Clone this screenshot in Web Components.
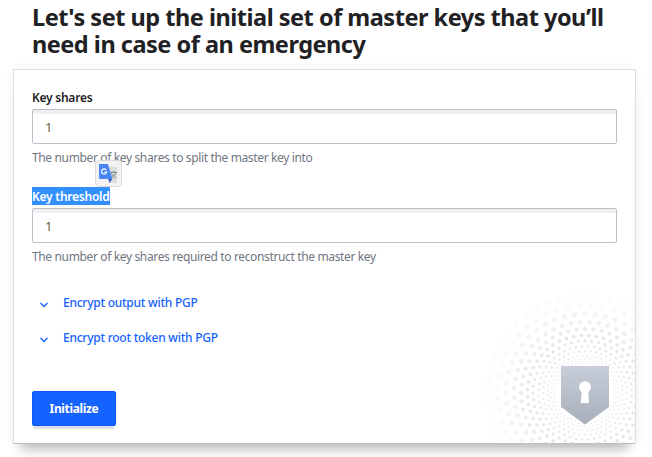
<!DOCTYPE html>
<html lang="en"><head><meta charset="utf-8"><title>Initialize</title>
<style>
html,body{margin:0;background:#fff}
body{width:652px;height:457px;overflow:hidden;font-family:"Noto Sans","Open Sans",sans-serif;color:#1f2124}
</style></head><body>
<setup-page></setup-page>
<script>
const define=(name,html,init)=>customElements.define(name,class extends HTMLElement{
  constructor(){super();this.attachShadow({mode:'open'}).innerHTML=html;if(init)init(this,this.shadowRoot);}
});
define('page-title',`<style>:host{display:block;padding:4px 0 0 32px;height:65px;box-sizing:border-box;font:700 23.5px/27px "Noto Sans","Open Sans",sans-serif;letter-spacing:-.49px;white-space:nowrap}</style><slot></slot>`);
define('key-field',`<style>:host{display:block;height:99px;font-size:12px;white-space:nowrap}
.l{display:block;height:18px;line-height:19px;width:max-content;font-weight:600;letter-spacing:-.24px}
:host([selected]) .l{background:#3390ff;color:#fff}
.i{box-sizing:border-box;width:585px;height:35px;margin-top:3px;border:1px solid #bac1cc;border-radius:2px;background:#fff;box-shadow:inset 0 4px 0 #f0f0f0;padding:2px 12px 0;line-height:30px;font-size:13px;color:#6f6347}
.h{line-height:18px;margin-top:5px;color:#6f7682;letter-spacing:-.36px}</style><span class="l"><slot name="label"></slot></span><div class="i"><slot name="value"></slot></div><div class="h"><slot name="help"></slot></div>`);
define('toggle-link',`<style>:host{display:flex;align-items:center;height:35px;color:#1563ff;font-size:12px;font-weight:500;letter-spacing:-.25px;white-space:nowrap}
svg{width:10px;height:8px;margin:2px 14px 0 7px}span{padding-bottom:2px}</style><svg viewBox="0 0 10 8"><path d="M1.500 2 5 5.500 8.500 2" fill="none" stroke="#1563ff" stroke-width="1.4"/></svg><span><slot></slot></span>`);
define('primary-button',`<style>:host{display:flex;align-items:center;justify-content:center;box-sizing:border-box;width:84px;height:35px;border:1px solid #0f5bf5;border-radius:2px;background:#1563ff;color:#fff;font-size:12px;font-weight:700;letter-spacing:-.35px;box-shadow:0 5px 1px -2px #dfe1e6}</style><slot></slot>`);
define('translate-badge',`<style>:host{display:block;width:27px;height:27px}svg{display:block}</style>
<svg width="27" height="27" viewBox="0 0 27 27"><rect x=".5" y=".5" width="26" height="26" rx="3.5" fill="#f3f3f3" stroke="#dcdcdc"/><path d="M10 7h12.200v16H15z" fill="#dedede"/><path d="M15.500 12.400h6.500M18.500 11v1.400M20.800 12.500c-.5 2.200-2 4.100-4.800 5.500M16.500 13.500c1 2 2.600 3.600 4.800 4.500" fill="none" stroke="#738891" stroke-width="1"/><path d="M13.200 18.800h4.200L14.500 23z" fill="#3454c5"/><path d="M4 4h8.900l4.500 15H5.200Q4 19 4 17.800z" fill="#4a86f3"/><path d="M11.200 9.800A2.600 2.600 0 1 0 11.700 12H9.300" fill="none" stroke="#fff" stroke-width="1.2"/></svg>`);
define('vault-art',`<style>:host{display:block;width:150px;height:155px}svg{display:block}</style><svg width="150" height="155" viewBox="485 288 150 155"><defs><linearGradient id="g" x2="0" y2="1"><stop stop-color="#c8ced9"/><stop offset="1" stop-color="#a7afbb"/></linearGradient></defs><g id="dots" fill="#dfe3e9"></g><path d="M561 366h48v41l-24 17.500-24-17.500z" fill="url(#g)"/><path d="M581.700 392.300A6 6 0 1 1 588.300 392.300L589 403h-8.500z" fill="#fff"/></svg>`,(h,r)=>{
  const radii=[97.5,87.6,79,71,64,57.6,52,46.6,42,37.6,34,30.6],fade=[.1,.19,.36,.5,.68,.85,.82,.7,.6,.5,.5,.5];let s='';
  radii.forEach((R,k)=>{for(let i=0;i<48;i++){const a=(i+(k%2)/2)*Math.PI/24;
    s+=`<circle cx="${(585+R*Math.sin(a)).toFixed(2)}" cy="${(393-R*Math.cos(a)).toFixed(2)}" r="${(R*.032).toFixed(2)}" opacity="${fade[k]}"/>`}});
  r.getElementById('dots').innerHTML=s;});
define('setup-card',`<style>:host{display:block;position:relative;box-sizing:border-box;width:623px;height:375px;margin-left:13px;padding:18px 18px 0;border:1px solid #dedfe2;border-bottom-color:#bfc0c2;background:#fff;box-shadow:0 13px 12px -8px rgba(0,0,0,.28),0 0 12px rgba(0,0,0,.035)}
vault-art{position:absolute;right:0;bottom:0}
.btn{padding-top:35px}
translate-badge{position:absolute;left:81px;top:90px}</style><vault-art></vault-art><slot></slot><div class="links"><slot name="links"></slot></div><div class="btn"><slot name="action"></slot></div><translate-badge></translate-badge>`);
define('setup-page',`<style>:host{display:block}page-title{margin-bottom:4px}</style>
<page-title>Let's set up the initial set of master keys that you’ll<br>need in case of an emergency</page-title>
<setup-card><key-field><span slot="label">Key shares</span><span slot="value">1</span><span slot="help">The number of key shares to split the master key into</span></key-field>
<key-field selected><span slot="label">Key threshold</span><span slot="value">1</span><span slot="help">The number of key shares required to reconstruct the master key</span></key-field>
<toggle-link slot="links">Encrypt output with PGP</toggle-link><toggle-link slot="links">Encrypt root token with PGP</toggle-link><primary-button slot="action">Initialize</primary-button></setup-card>`);
</script></body></html>
